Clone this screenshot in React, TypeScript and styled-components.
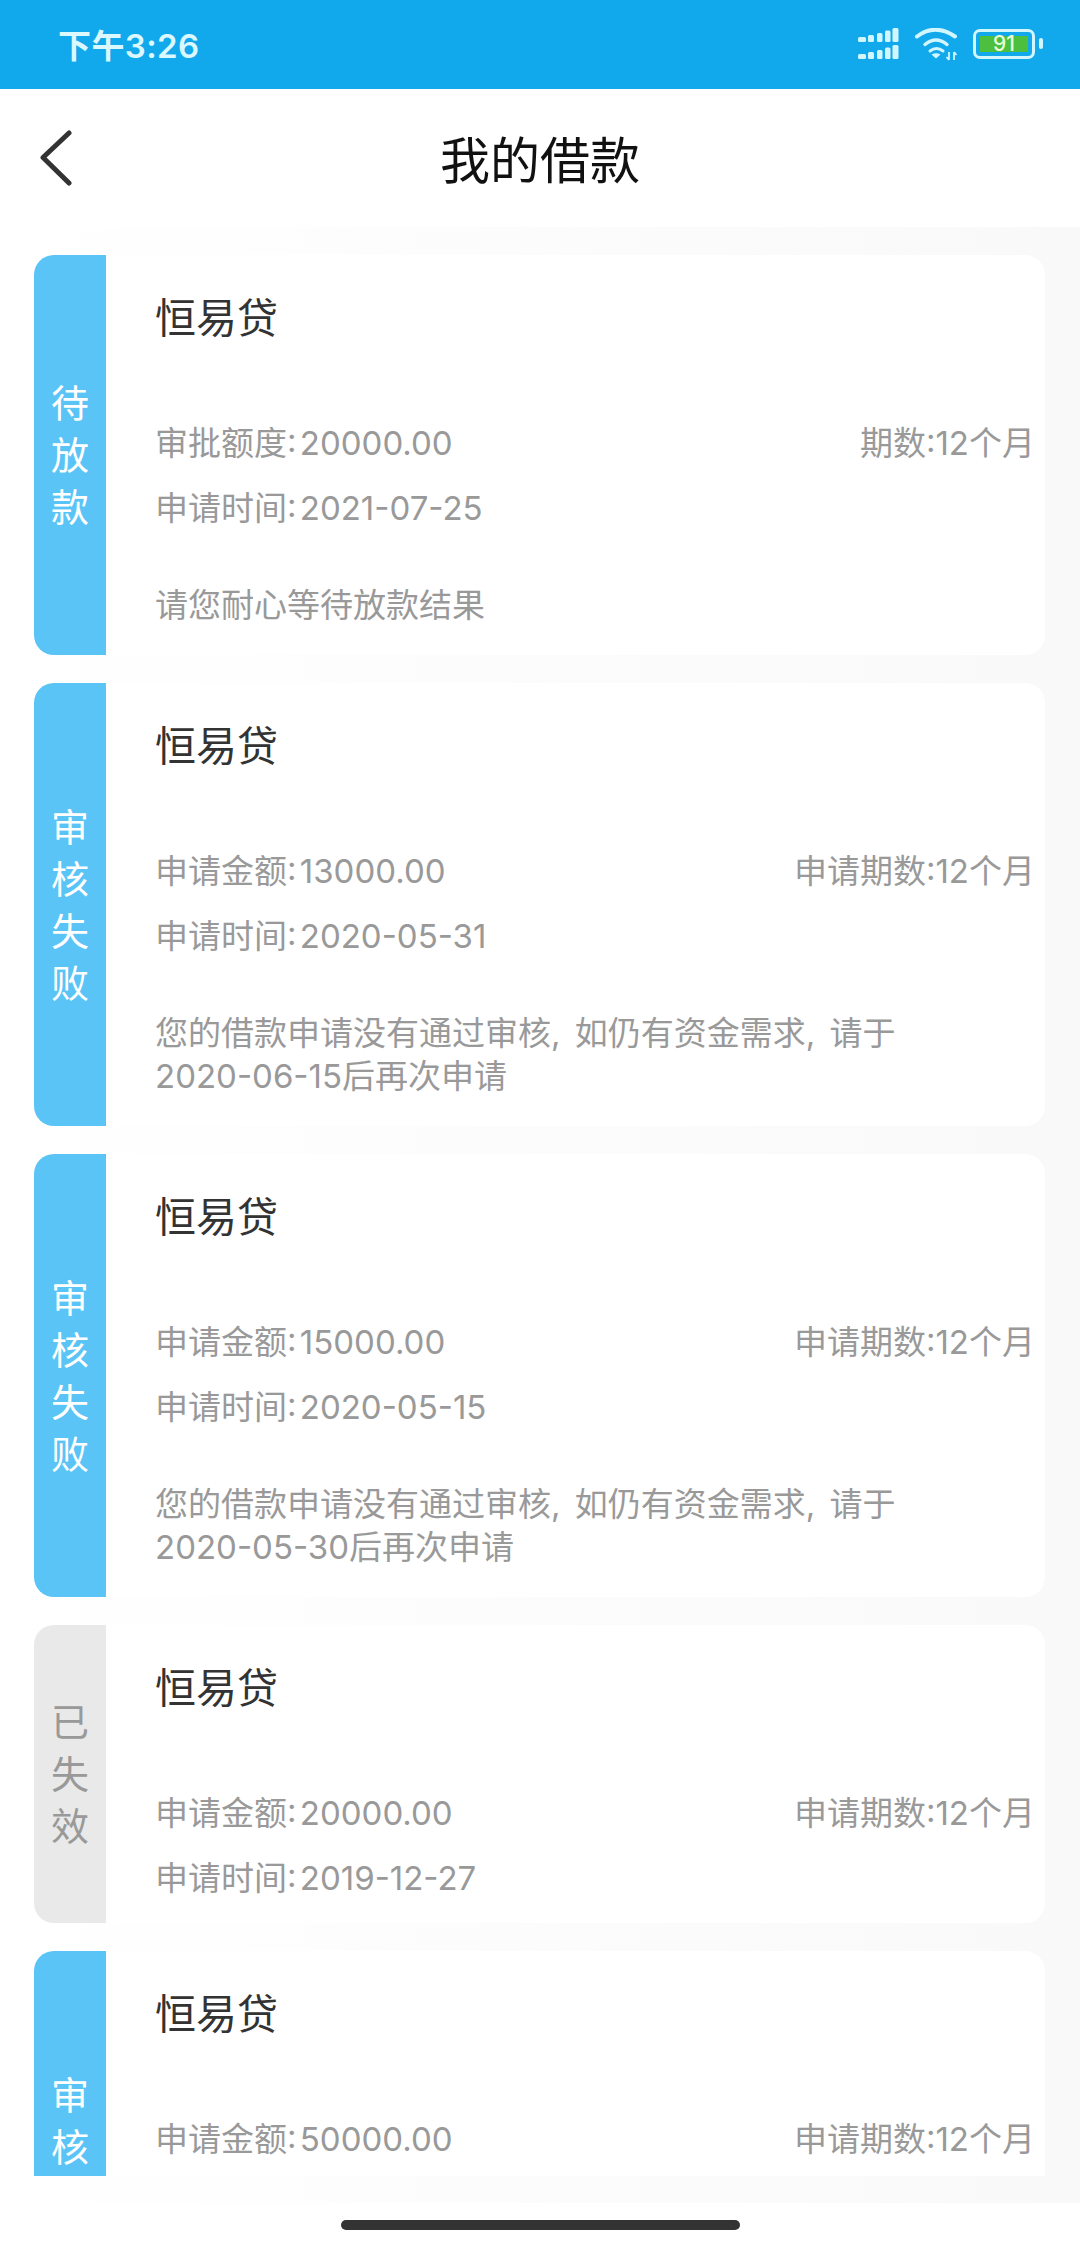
import styled, { createGlobalStyle } from "styled-components";

interface LoanType {
  id: number;
  status: string;
  expired?: boolean;
  amountLabel: string;
  amount: string;
  termLabel: string;
  date?: string;
  note?: string[];
  cutOff?: boolean;
}

const loanList: LoanType[] = [
  {
    id: 1,
    status: "待放款",
    amountLabel: "审批额度",
    amount: "20000.00",
    termLabel: "期数",
    date: "2021-07-25",
    note: ["请您耐心等待放款结果"],
  },
  {
    id: 2,
    status: "审核失败",
    amountLabel: "申请金额",
    amount: "13000.00",
    termLabel: "申请期数",
    date: "2020-05-31",
    note: ["您的借款申请没有通过审核, 如仍有资金需求, 请于", "2020-06-15后再次申请"],
  },
  {
    id: 3,
    status: "审核失败",
    amountLabel: "申请金额",
    amount: "15000.00",
    termLabel: "申请期数",
    date: "2020-05-15",
    note: ["您的借款申请没有通过审核, 如仍有资金需求, 请于", "2020-05-30后再次申请"],
  },
  {
    id: 4,
    status: "已失效",
    expired: true,
    amountLabel: "申请金额",
    amount: "20000.00",
    termLabel: "申请期数",
    date: "2019-12-27",
  },
  // the last card runs past the bottom of the list
  {
    id: 5,
    status: "审核失败",
    amountLabel: "申请金额",
    amount: "50000.00",
    termLabel: "申请期数",
    cutOff: true,
  },
];

const SignalRow = ({ y }: { y: number }) => (
  <>
    <rect x="0" y={y + 9} width="8" height="5" rx="1.500" />
    <rect x="10" y={y + 7} width="6" height="7" rx="1.500" />
    <rect x="19" y={y + 5} width="5.500" height="9" rx="1.500" />
    <rect x="27" y={y + 2.500} width="5.500" height="11.500" rx="1.500" />
    <rect x="34.500" y={y} width="6" height="14" rx="1.500" />
  </>
);

const SignalIcon = () => (
  <svg width="41" height="32" viewBox="0 0 41 32" fill="#d2f6ff">
    <SignalRow y={0} />
    <SignalRow y={17} />
  </svg>
);

const WifiIcon = () => (
  <svg width="44" height="33" viewBox="0 0 44 33" fill="none">
    <g stroke="#d2f6ff" strokeLinecap="round">
      <path d="M3 8.500Q21 -5 41 8.500" strokeWidth="4" />
      <path d="M11 16.500Q22 7.500 33 16.500" strokeWidth="3.500" />
      <path d="M16 23Q22.500 18 29 23" strokeWidth="3" />
    </g>
    <path d="M17.500 26.500Q22 24 26.500 26.500L22 30.500z" fill="#d2f6ff" />
    <path
      d="M35 24v8M35 32l-2.500-3M40 32v-8M40 24l2.500 3"
      stroke="#d2f6ff"
      strokeWidth="1.800"
    />
  </svg>
);

const BackIcon = () => (
  <svg width="32" height="56" viewBox="0 0 32 56" fill="none">
    <path
      d="M29 3L3 27.500L29 53"
      stroke="#333"
      strokeWidth="5"
      strokeLinecap="round"
      strokeLinejoin="round"
    />
  </svg>
);

const App = () => {
  return (
    <>
      <GlobalStyle />
      <Page>
        <StatusBar>
          <Clock>下午3:26</Clock>
          <StatusIcons>
            <SignalIcon />
            <WifiIcon />
            <Battery>
              <BatteryFill>91</BatteryFill>
            </Battery>
          </StatusIcons>
        </StatusBar>
        <NavBar>
          <BackButton>
            <BackIcon />
          </BackButton>
          <NavTitle>我的借款</NavTitle>
        </NavBar>
        <ListArea>
          <ListClip>
            {loanList.map((loan) => (
              <Card key={loan.id} cutOff={loan.cutOff}>
                <StatusTag expired={loan.expired}>
                  <StatusText>{loan.status}</StatusText>
                </StatusTag>
                <CardBody>
                  <ProductName>恒易贷</ProductName>
                  <AmountRow>
                    <span>
                      {loan.amountLabel}: {loan.amount}
                    </span>
                    <span>{loan.termLabel}:12个月</span>
                  </AmountRow>
                  {loan.date && <DateRow>申请时间: {loan.date}</DateRow>}
                  {loan.note && (
                    <Note>
                      {loan.note.map((line) => (
                        <div key={line}>{line}</div>
                      ))}
                    </Note>
                  )}
                </CardBody>
              </Card>
            ))}
          </ListClip>
        </ListArea>
        <HomeBar>
          <HomeIndicator />
        </HomeBar>
      </Page>
    </>
  );
};

const GlobalStyle = createGlobalStyle`
  html, body {
    margin: 0;
    padding: 0;
    background: #fff;
  }
  * {
    box-sizing: border-box;
  }
  body {
    font-family: Inter, "Noto Sans CJK SC", "Noto Sans", sans-serif;
  }
`;

const Page = styled.div`
  width: 1080px;
  height: 2248px;
  display: flex;
  flex-direction: column;
  overflow: hidden;
  background: #fff;
`;

const StatusBar = styled.div`
  height: 89px;
  flex-shrink: 0;
  display: flex;
  align-items: center;
  justify-content: space-between;
  padding: 0 39px 0 58px;
  background: #12a8ec;
`;

const Clock = styled.div`
  font-size: 33px;
  font-weight: 600;
  letter-spacing: 0.4px;
  color: #dcf8ff;
  margin-top: -2px;
`;

const StatusIcons = styled.div`
  display: flex;
  align-items: center;
  gap: 15px;
  margin-top: -1px;
`;

const Battery = styled.div`
  position: relative;
  width: 62px;
  height: 30px;
  margin-right: 6px;
  padding: 4px;
  border: 3px solid #d2f6ff;
  border-radius: 7px;

  &::after {
    content: "";
    position: absolute;
    right: -11px;
    top: 6px;
    width: 4px;
    height: 11px;
    border-radius: 2px;
    background: #d2f6ff;
  }
`;

const BatteryFill = styled.div`
  height: 16px;
  background: #4cbf3f;
  color: #e6ffd9;
  font-size: 21px;
  font-weight: 500;
  line-height: 16px;
  text-align: center;
`;

const NavBar = styled.div`
  height: 138px;
  flex-shrink: 0;
  display: flex;
  align-items: center;
  justify-content: center;
  position: relative;
`;

const BackButton = styled.div`
  position: absolute;
  left: 40px;
  top: 41px;
  display: flex;
`;

const NavTitle = styled.div`
  font-size: 50px;
  color: #111;
  line-height: 60px;
  margin-top: 6px;
`;

const ListArea = styled.div`
  height: 1976px;
  flex-shrink: 0;
  padding: 28px 35px 27px 34px;
  background: linear-gradient(90deg, #fff, #f9f9f9);
`;

const ListClip = styled.div`
  height: 100%;
  overflow: hidden;
  display: flex;
  flex-direction: column;
  gap: 28px;
`;

const Card = styled.div<{ cutOff?: boolean }>`
  display: flex;
  flex-shrink: 0;
  min-height: ${({ cutOff }) => (cutOff ? "443px" : "auto")};
  background: #fff;
  border-radius: 20px;
  overflow: hidden;
`;

const StatusTag = styled.div<{ expired?: boolean }>`
  width: 72px;
  flex-shrink: 0;
  display: flex;
  align-items: center;
  justify-content: center;
  background: ${({ expired }) => (expired ? "#e9e9e9" : "#5ac4f6")};
  color: ${({ expired }) => (expired ? "#999" : "#fff")};
`;

const StatusText = styled.div`
  width: 38px;
  font-size: 38px;
  line-height: 52px;
  word-break: break-all;
  text-align: center;
`;

const CardBody = styled.div`
  flex: 1;
  min-width: 0;
  padding: 35px 10px 23px 49px;
`;

const ProductName = styled.div`
  font-size: 41px;
  line-height: 56px;
  color: #333;
`;

const AmountRow = styled.div`
  display: flex;
  justify-content: space-between;
  margin-top: 75px;
  font-size: 33px;
  line-height: 44px;
  word-spacing: -6px;
  color: #999;
`;

const DateRow = styled.div`
  margin-top: 21px;
  font-size: 33px;
  line-height: 44px;
  word-spacing: -6px;
  color: #999;
`;

const Note = styled.div`
  margin-top: 54px;
  margin-bottom: 5px;
  font-size: 33px;
  line-height: 43px;
  word-spacing: 5px;
  color: #999;
`;

const HomeBar = styled.div`
  flex: 1;
  display: flex;
  justify-content: center;
  padding-top: 17px;
`;

const HomeIndicator = styled.div`
  width: 399px;
  height: 10px;
  border-radius: 5px;
  background: #333;
`;

export default App;
